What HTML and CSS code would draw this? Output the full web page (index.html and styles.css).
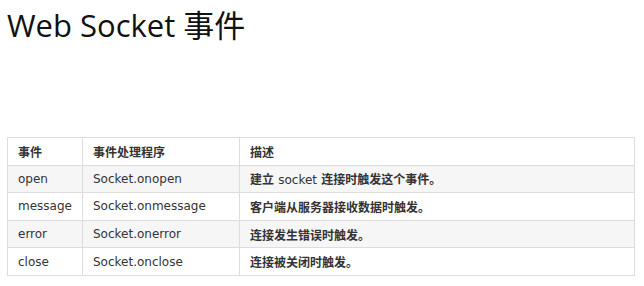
FILE: index.html
```html
<!DOCTYPE html>
<html lang="zh">
<head>
<meta charset="utf-8">
<link rel="stylesheet" href="styles.css">
</head>
<body>
<h1 class="title">Web Socket 事件</h1>
<table class="events">
  <thead>
    <tr><th class="c1">事件</th><th class="c2">事件处理程序</th><th>描述</th></tr>
  </thead>
  <tbody>
    <tr><td>open</td><td>Socket.onopen</td><td class="desc">建立 <span class="latin">socket</span> 连接时触发这个事件。</td></tr>
    <tr><td>message</td><td>Socket.onmessage</td><td class="desc">客户端从服务器接收数据时触发。</td></tr>
    <tr><td>error</td><td>Socket.onerror</td><td class="desc">连接发生错误时触发。</td></tr>
    <tr><td>close</td><td>Socket.onclose</td><td class="desc">连接被关闭时触发。</td></tr>
  </tbody>
</table>
</body>
</html>
```
FILE: styles.css
```css
html, body {
  margin: 0;
  padding: 0;
  background: #fff;
}
body {
  padding: 5px 9px 0 7px;
}
.title {
  margin: 0 0 0 0;
  font-family: "Open Sans", "Noto Sans CJK SC", sans-serif;
  font-weight: 400;
  font-size: 31px;
  line-height: 40px;
  color: #111;
}
.events {
  margin-top: 92px;
  width: 628px;
  border-collapse: collapse;
  font-family: "DejaVu Sans", "Noto Sans CJK SC", sans-serif;
  font-size: 12px;
  color: #333;
}
.events th, .events td {
  border: 1px solid #dddddd;
  padding: 0 10px;
  height: 26.6px;
  text-align: left;
  vertical-align: middle;
}
.events th {
  font-weight: bold;
  background: #fff;
}
.events .c1 { width: 54px; }
.events .c2 { width: 136px; }
.events tbody tr:nth-child(odd) td { background: #f6f6f6; }
.events tbody tr:nth-child(even) td { background: #fff; }
.events .desc { font-weight: 600; }
.events .desc .latin { font-weight: 400; }
```
